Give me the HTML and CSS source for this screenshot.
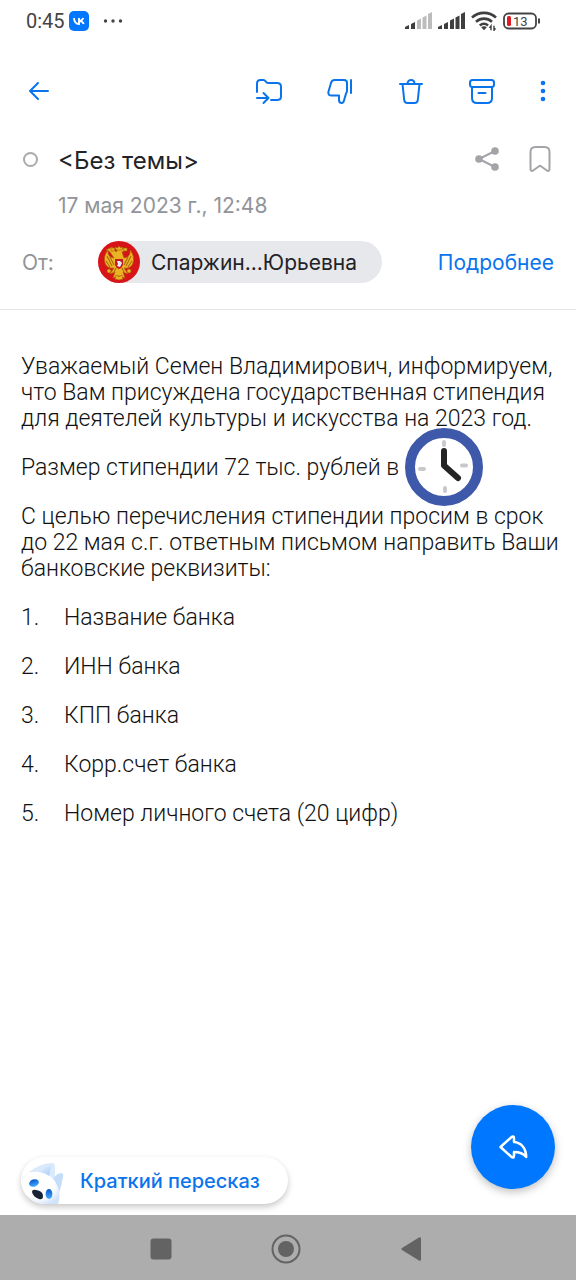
FILE: index.html
```html
<!DOCTYPE html>
<html lang="ru">
<head>
<meta charset="utf-8">
<meta name="viewport" content="width=device-width, initial-scale=1">
<title>Письмо</title>
<link rel="stylesheet" href="styles.css">
</head>
<body>
<div class="screen">
  <div class="status">
    <span class="time">0:45</span>
    <svg class="vk" width="20" height="20" viewBox="0 0 20 20" aria-hidden="true"><rect width="20" height="20" rx="5" fill="#0077ff"/><path d="M5 7c.2 3.800 2 6 5 6V7M10 10c2 0 3.600-1.200 4.300-3M10.300 10c2 0 3.700 1.300 4.400 3" fill="none" stroke="#fff" stroke-width="1.900"/></svg>
    <svg class="more" width="20" height="6" viewBox="0 0 20 6" fill="#444" aria-hidden="true"><circle cx="2.500" cy="3" r="1.700"/><circle cx="10" cy="3" r="1.700"/><circle cx="17.500" cy="3" r="1.700"/></svg>
    <div class="signals">
      <svg width="27" height="18" viewBox="0 0 27 18" fill="#3f3f3f" aria-hidden="true"><path d="M0 15l4-2v4H0zM6 12l4-2v7H6z"/><path d="M12 8.500l4-2V17h-4zM17.500 5.500l4-2V17h-4zM23 2l4-2v17h-4z" fill="#bcbcbc"/></svg>
      <svg width="27" height="18" viewBox="0 0 27 18" fill="#3f3f3f" aria-hidden="true"><path d="M0 15l4-2v4H0zM6 12l4-2v7H6zM12 8.500l4-2V17h-4zM17.500 5.500l4-2V17h-4zM23 2l4-2v17h-4z"/></svg>
      <svg width="26" height="20" viewBox="0 0 26 20" fill="none" stroke="#3f3f3f" stroke-width="2.600" aria-hidden="true"><path d="M1 6.500c7-6.200 17-6.200 24 0M5 10.800c4.800-4.200 11.200-4.200 16 0M8.800 14.500c2.700-2.200 5.700-2.200 8.200 0"/><path d="M10.200 16.300L13 19.300l2.800-3c-1.600-1.300-4-1.300-5.600 0z" fill="#3f3f3f" stroke="none"/><path d="M20 19.300v-4.500l-1.500 2M23 14.800v4.500l1.500-2" stroke-width="1.400"/></svg>
      <svg class="battery" width="38" height="18" viewBox="0 0 38 18" aria-hidden="true"><rect x="1" y="1.500" width="32" height="15" rx="4.500" fill="none" stroke="#444" stroke-width="1.800"/><path d="M36 6.500v5" stroke="#444" stroke-width="2"/><rect x="4" y="4" width="4" height="10" rx="1.500" fill="#e11b24"/><text x="10" y="13.500">13</text></svg>
    </div>
  </div>

  <nav class="toolbar" aria-label="Действия с письмом">
    <button class="icon" aria-label="Назад"><svg width="28" height="28" viewBox="0 0 28 28"><path d="M23 14H6M13 6l-8 8 8 8"/></svg></button>
    <div class="actions">
      <button class="icon" aria-label="Переместить"><svg width="28" height="28" viewBox="0 0 28 28"><path d="M2 15V6.500Q2 3 5.500 3h3.200c1.700 0 2.200 3 4.300 3h9Q26 6 26 9.500v10Q26 23 22 23h-6M2 21h11.500M8.500 16l5 5-5 5"/></svg></button>
      <button class="icon" aria-label="Спам"><svg width="28" height="28" viewBox="0 0 28 28"><path d="M25 3v13M8.500 3H18q3 0 3 3v8c0 1-.6 1.800-1 2.600l-2 6.900q-.6 2.500-2.300 2.500-2.700 0-2.700-3v-4.500H5.500q-3.300 0-3.200-3.200L5 6q.8-3 3.500-3z"/></svg></button>
      <button class="icon" aria-label="Удалить"><svg width="28" height="28" viewBox="0 0 28 28"><path d="M3 7h22M10.500 7c0-5.300 7-5.300 7 0M5.500 7l1.700 16q.3 3 3.300 3h7q3 0 3.300-3L22.500 7"/></svg></button>
      <button class="icon" aria-label="В архив"><svg width="28" height="28" viewBox="0 0 28 28"><rect x="2" y="3" width="24" height="7" rx="2.500"/><path d="M4 10v11q0 5 5 5h10q5 0 5-5V10M10.500 16h7"/></svg></button>
      <button class="icon dots" aria-label="Ещё"><svg width="8" height="28" viewBox="0 0 8 28"><circle cx="4" cy="6" r="2.300"/><circle cx="4" cy="14" r="2.300"/><circle cx="4" cy="22" r="2.300"/></svg></button>
    </div>
  </nav>

  <header class="head">
    <div class="subject-row">
      <button class="unread" aria-label="Отметить непрочитанным"></button>
      <h1 class="subject">&lt;Без темы&gt;</h1>
      <button class="icon grey" aria-label="Поделиться"><svg width="26" height="28" viewBox="0 0 26 28"><path d="M21 6L5 14l16 8"/><g class="solid"><circle cx="21" cy="6" r="3.800"/><circle cx="5" cy="14" r="3.800"/><circle cx="21" cy="22" r="3.800"/></g></svg></button>
      <button class="icon grey mark" aria-label="В закладки"><svg width="24" height="28" viewBox="0 0 24 28"><path d="M2.500 7q0-5 5-5h9q5 0 5 5v17c0 2-1.500 2.400-3 1.200L13 21.300q-1-.8-2 0l-5.500 3.900c-1.500 1.200-3 .8-3-1.200z"/></svg></button>
    </div>
    <time class="date" datetime="2023-05-17T12:48">17 мая 2023 г., 12:48</time>
    <div class="from-row">
      <span class="from">От:</span>
      <button class="sender">
        <svg width="42" height="42" viewBox="0 0 42 42" aria-hidden="true">
          <circle cx="21" cy="21" r="21" fill="#d71418"/>
          <g fill="#e9b323" stroke="#ad5c0c" stroke-width=".6">
            <path d="M16 17Q9 16 10 9Q5 15 7 22q2 6 9 5l-4 6 5-2-2 6 6-2 6 2-2-6 5 2-4-6q7 1 9-5 2-7-3-13 1 7-6 8l-2-6 4-2-6-3-4 5-4-5-6 3 4 2z"/>
            <path d="M18 9l-1-3 2.500 1L21 5l1.500 2L25 6l-1 3z"/><path d="M13 10l0-3 4 0-1 3zM29 10l0-3-4 0 1 3z"/>
            <circle cx="11" cy="30" r="2"/><circle cx="31" cy="30" r="2"/>
            <path d="M18 34q3 3 6 0l1 4-4 1-4-1z"/>
          </g>
          <path d="M9 15l5 10M8 20l4 6M12 16l4 8M33 15l-5 10M34 20l-4 6M30 16l-4 8M16 31l2-4M26 31l-2-4" stroke="#a45d0b" fill="none"/>
          <path d="M17 18h8v6q-1 3-4 4-3-1-4-4z" fill="#c51a20"/><path d="M19 20h3l2 2-2 4-3-1 1-2z" fill="#e7edf5"/>
        </svg>
        <span>Спаржин...Юрьевна</span>
      </button>
      <a class="details" href="#details">Подробнее</a>
    </div>
  </header>

  <main class="letter">
    <p>Уважаемый Семен Владимирович, информируем, что Вам присуждена государственная стипендия для деятелей культуры и искусства на 2023 год.</p>
    <p>Размер стипендии 72 тыс. рублей в <span class="anchor">м<svg class="clock" width="78" height="78" viewBox="0 0 78 78" aria-hidden="true"><circle cx="39" cy="39" r="34" fill="#fff" stroke="#3e58aa" stroke-width="10"/><path d="M39 14v3M61 37.500h-4M40 63v-3M15 41h4" stroke="#c9c9cd" stroke-width="4" stroke-linecap="round"/><path d="M39 23v14.500l14 12.500" fill="none" stroke="#242424" stroke-width="6" stroke-linecap="round" stroke-linejoin="round"/></svg></span></p>
    <p>С целью перечисления стипендии просим в срок до 22 мая с.г. ответным письмом направить Ваши банковские реквизиты:</p>
    <ol class="list">
      <li><span class="num">1.</span>Название банка</li>
      <li><span class="num">2.</span>ИНН банка</li>
      <li><span class="num">3.</span>КПП банка</li>
      <li><span class="num">4.</span>Корр.счет банка</li>
      <li><span class="num">5.</span>Номер личного счета (20 цифр)</li>
    </ol>
  </main>

  <div class="floating">
    <button class="summary">
      <svg width="46" height="47" viewBox="0 0 46 47" aria-hidden="true">
        <defs>
          <linearGradient id="ear" x1="0" y1="0" x2="1" y2="1"><stop offset="0" stop-color="#eef7ff"/><stop offset="1" stop-color="#a5c9f3"/></linearGradient>
          <radialGradient id="face" cx=".45" cy=".4" r=".65"><stop offset=".65" stop-color="#fff"/><stop offset="1" stop-color="#cfe3fa"/></radialGradient>
          <linearGradient id="eye" x1="0" y1="0" x2="0" y2="1"><stop offset="0" stop-color="#0757c9"/><stop offset="1" stop-color="#45adff"/></linearGradient>
        </defs>
        <path d="M8 15Q20 6 31 6q3 0 3 4v13z" fill="#d9eafc"/><path d="M17 15q7-5 13-6l-2 10z" fill="url(#ear)"/>
        <path d="M32 22q4-6 8-6 3 0 2 4-2 10-4 16z" fill="#c4ddf8"/>
        <path d="M1 20Q8 14 18 15q14 2 19 15 3 8 0 17H22Q2 45 1 20z" fill="url(#face)"/>
        <ellipse cx="13" cy="26" rx="5" ry="3.600" transform="rotate(-18 13 26)" fill="url(#eye)"/>
        <ellipse cx="28" cy="37" rx="3.400" ry="5" fill="url(#eye)"/>
        <path d="M11 35q0-3 4-2 7 1 7 6 0 4-4 3-6-2-7-7z" fill="#182334"/>
      </svg>
      <span>Краткий пересказ</span>
    </button>
    <button class="reply" aria-label="Ответить"><svg width="32" height="28" viewBox="0 0 32 28"><path d="M3.500 14L14 4.500q3-2.500 3 1V9c7 .5 12 6 12.200 15q-4-5-12.200-5v3.500q0 3.500-3 1z"/></svg></button>
  </div>

  <nav class="system" aria-label="Системная навигация">
    <button aria-label="Недавние"><svg width="30" height="30" viewBox="0 0 30 30"><rect x="4.500" y="4.500" width="21" height="21" rx="3"/></svg></button>
    <button aria-label="Домой"><svg width="30" height="30" viewBox="0 0 30 30"><circle cx="15" cy="15" r="13.500" fill="none" stroke="#636363" stroke-width="2"/><circle cx="15" cy="15" r="8"/></svg></button>
    <button aria-label="Назад"><svg width="30" height="30" viewBox="0 0 30 30"><path d="M6 14L23 3.500q2-1 2 1v21q0 2-2 1L6 16q-1.500-1 0-2z"/></svg></button>
  </nav>
</div>
</body>
</html>
```

FILE: styles.css
```css
* { box-sizing: border-box; }
body { margin: 0; background: #fff; color: #222326; font-family: Inter, "Liberation Sans", sans-serif; }
button { padding: 0; border: 0; background: none; color: inherit; font: inherit; cursor: pointer; }
svg { display: block; flex: none; }
h1, p, ol { margin: 0; padding: 0; }

.screen { display: flex; flex-direction: column; min-height: 100vh; }

.status { display: flex; align-items: center; height: 42px; padding: 0 35px 0 26px; }
.time { font: 20px/24px Roboto, sans-serif; color: #444; }
.vk { margin-left: 4px; }
.more { margin-left: 14px; }
.signals { display: flex; align-items: center; gap: 6px; margin-left: auto; }
.battery text { font: 13px Roboto, sans-serif; fill: #444; }

.toolbar { display: flex; align-items: center; justify-content: space-between; height: 98px; padding: 0 29px 0 25px; }
.actions { display: flex; align-items: center; gap: 43px; }
.icon svg { fill: none; stroke: #0a74ed; stroke-width: 2; stroke-linecap: round; stroke-linejoin: round; }
.icon.dots svg { fill: #0a74ed; stroke: none; }
.icon.grey svg { stroke: #a2a4a8; }
.solid { fill: #a2a4a8; stroke: none; }

.head { padding: 2px 22px 26px; border-bottom: 1px solid #e4e5e8; }
.subject-row { display: flex; align-items: center; height: 34px; }
.unread { width: 15px; height: 15px; margin-left: 1px; margin-right: 20px; border: 2px solid #a9abaf; border-radius: 50%; }
.subject { flex: 1; padding-top: 4px; font-size: 24px; font-weight: 400; line-height: 30px; }
.mark { margin-left: 28px; margin-right: 2px; }
.date { display: block; margin: 16px 0 21px 36px; font-size: 21px; line-height: 28px; color: #919499; }
.from-row { display: flex; align-items: center; font-size: 21px; line-height: 28px; }
.from { width: 76px; padding-top: 2px; color: #919499; }
.sender { display: flex; align-items: center; gap: 11px; padding-right: 25px; border-radius: 21px; background: #e7e8ec; }
.sender span { padding-top: 2px; }
.details { margin-left: auto; padding-top: 2px; color: #0a74ed; text-decoration: none; }

.letter { padding: 44px 14px 40px 21px; font: 300 23px/26px Roboto, sans-serif; color: #111; }
.letter p, .list li { margin-bottom: 23px; }
.list { list-style: none; }
.list li { display: flex; }
.num { width: 43px; }
.anchor { position: relative; }
.clock { position: absolute; left: 0; top: -26px; }

.floating { display: flex; align-items: flex-end; justify-content: space-between; margin-top: auto; padding: 0 21px 11px; }
.summary { display: flex; align-items: center; gap: 13px; height: 47px; padding-right: 28px; overflow: hidden; border-radius: 24px; background: #fff; box-shadow: 0 3px 6px rgba(0, 0, 0, .22); color: #0a74ed; font: 500 20px/28px Inter, sans-serif; }
.reply { display: grid; place-items: center; width: 84px; height: 84px; margin-bottom: 15px; border-radius: 50%; background: #0077ff; box-shadow: 0 3px 8px rgba(0, 0, 0, .25); }
.reply svg { fill: none; stroke: #fff; stroke-width: 2.5; stroke-linejoin: round; }

.system { display: flex; align-items: center; justify-content: center; gap: 95px; height: 65px; padding: 2px 4px 0 0; background: #adadad; }
.system svg { fill: #636363; }
```
